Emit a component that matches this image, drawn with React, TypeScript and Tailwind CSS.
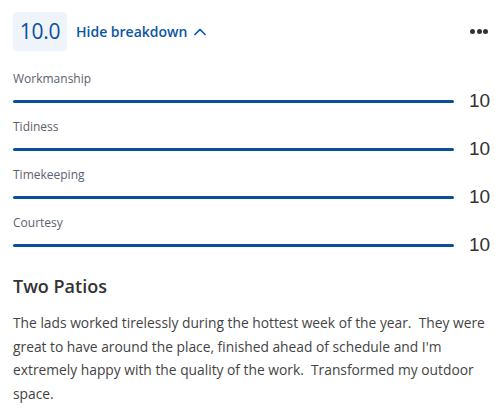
import React from "react";

// rating categories shown in the breakdown
const ratings = [
  { label: "Workmanship", score: 10 },
  { label: "Tidiness", score: 10 },
  { label: "Timekeeping", score: 10 },
  { label: "Courtesy", score: 10 },
];

const ChevronUp: React.FC = () => (
  <svg width="14" height="14" viewBox="0 0 14 14" fill="none" className="ml-[6px]">
    <path d="M2 9.5 L7 4.5 L12 9.5" stroke="#0b55a6" strokeWidth="1.7" strokeLinecap="round" strokeLinejoin="round" />
  </svg>
);

const App: React.FC = () => {
  return (
    <div className="w-[500px] h-[412px] bg-white px-[13px] pt-[12px] overflow-hidden font-['Open_Sans',sans-serif]">
      {/* header */}
      <div className="flex items-center justify-between">
        <div className="flex items-center">
          <div className="w-[54px] h-[39px] rounded-[4px] bg-[#eff4fa] flex items-center justify-center text-[21px] font-medium text-[#0b4f9c] tracking-[-0.3px]">
            10.0
          </div>
          <button type="button" className="ml-[9px] flex items-center text-[14px] font-semibold text-[#0b55a6]">
            Hide breakdown
            <ChevronUp />
          </button>
        </div>
        <div className="flex items-center gap-[1.5px] -mr-[1px]">
          <span className="w-[5px] h-[5px] rounded-full bg-[#333]"></span>
          <span className="w-[5px] h-[5px] rounded-full bg-[#333]"></span>
          <span className="w-[5px] h-[5px] rounded-full bg-[#333]"></span>
        </div>
      </div>

      {/* breakdown */}
      <div className="mt-[20px]">
        {ratings.map((r) => (
          <div key={r.label} className="h-[48px]">
            <div className="text-[12px] leading-[16px] text-[#5c6170]">{r.label}</div>
            <div className="flex items-center h-[16px] mt-[6px]">
              <div className="flex-1 h-[3px] rounded-full bg-[#0b4f9c]"></div>
              <div className="w-[33px] pl-[15px] whitespace-nowrap text-[19px] leading-[22px] text-[#333] font-['Liberation_Sans',sans-serif]">
                {r.score}
              </div>
            </div>
          </div>
        ))}
      </div>

      {/* review */}
      <h2 className="mt-[11px] text-[18px] font-semibold text-[#333] leading-[24px]">Two Patios</h2>
      <p className="mt-[13px] text-[13.8px] leading-[23.5px] text-[#444] whitespace-pre-wrap">
        {"The lads worked tirelessly during the hottest week of the year.  They were great to have around the place, finished ahead of schedule and I'm extremely happy with the quality of the work.  Transformed my outdoor space."}
      </p>
    </div>
  );
};

export default App;
